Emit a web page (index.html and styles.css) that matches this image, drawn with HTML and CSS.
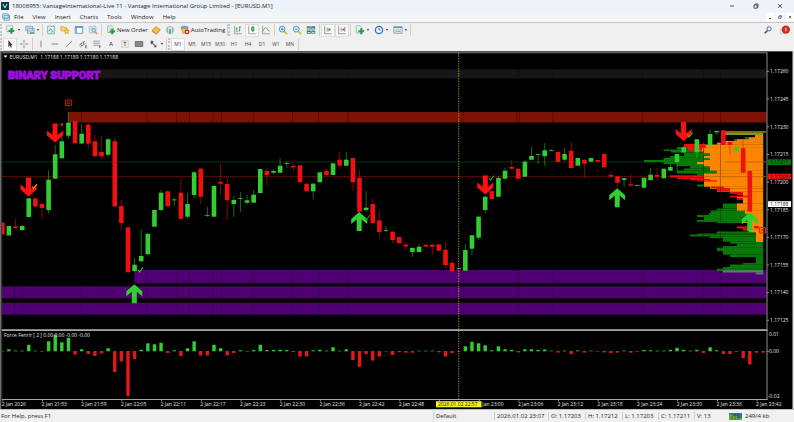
FILE: index.html
```html
<!DOCTYPE html>
<html lang="en">
<head>
<meta charset="utf-8">
<title>18008955: VantageInternational-Live 11 - [EURUSD,M1]</title>
<link rel="stylesheet" href="styles.css">
</head>
<body>
<header class="titlebar">
  <svg class="app-icon" viewBox="0 0 8 8"><rect width="8" height="8" fill="#0b3d46"/><path d="M2 2l2 4 2-4" fill="none" stroke="#d8eef0" stroke-width=".9"/></svg>
  <h1 class="title">18008955: VantageInternational-Live 11 - Vantage International Group Limited - [EURUSD,M1]</h1>
  <div class="window-buttons">
    <button aria-label="Minimize"><svg viewBox="0 0 8 8"><path d="M2 4h4" stroke="#333" stroke-width=".8"/></svg></button>
    <button aria-label="Restore"><svg viewBox="0 0 8 8"><path d="M2 3h3.2v3.2H2zM3 3V2h3v3.4h-.8" fill="none" stroke="#333" stroke-width=".8"/></svg></button>
    <button aria-label="Close"><svg viewBox="0 0 8 8"><path d="M2 2l4 4M6 2l-4 4" stroke="#333" stroke-width=".8"/></svg></button>
  </div>
</header>

<nav class="menubar">
  <svg class="menu-icon" viewBox="0 0 8 8"><path d="M.5.8h5.8v4.4H.5zM2 2.6h5.5v4.6H2z" fill="#e8f3fa" stroke="#4d93bd" stroke-width=".8"/><path d="M3 5.8l1.2-1.2 1 .7 1.3-1.4" fill="none" stroke="#4aa34a" stroke-width=".6"/></svg>
  <button>File</button><button>View</button><button>Insert</button><button>Charts</button><button>Tools</button><button>Window</button><button>Help</button>
  <div class="doc-buttons">
    <button aria-label="Minimize chart"><svg viewBox="0 0 8 8"><path d="M3 5.5h2" stroke="#444" stroke-width=".8"/></svg></button>
    <button aria-label="Restore chart"><svg viewBox="0 0 8 8"><path d="M2.5 3.6h2.3v2H2.5zM3.5 3.5v-1h2v2h-.7" fill="none" stroke="#557" stroke-width=".7"/></svg></button>
    <button aria-label="Close chart"><svg viewBox="0 0 8 8"><path d="M3 3l2.2 2.2M5.2 3L3 5.2" stroke="#444" stroke-width=".8"/></svg></button>
  </div>
</nav>

<div class="toolbar">
  <div class="group grip">
    <button class="drop" aria-label="New chart"><svg viewBox="0 0 12 12"><path d="M1 1h7v7H1z" fill="#f4f8fa" stroke="#8a9ba5" stroke-width=".8"/><path d="M6.5 3.5v7M3 7h7" stroke="#1fa52b" stroke-width="2.6"/></svg></button>
    <button class="drop" aria-label="Profiles"><svg viewBox="0 0 12 12"><path d="M1 1.5h8V7H1zM3 4h8v6H3z" fill="#cfe2f2" stroke="#6f9cc3" stroke-width=".9"/><path d="M6 9.5h5" stroke="#49a04f" stroke-width="1.4"/></svg></button>
  </div>
  <div class="group">
    <button aria-label="Market watch"><svg viewBox="0 0 12 12"><path d="M2 1.5h8v9H2z" fill="#e9f5fb" stroke="#58a6c9"/><path d="M3.5 7.5l2-3 2 2" fill="none" stroke="#3b9f48" stroke-width="1.2"/><path d="M6 9l2.500-2" stroke="#dd9b35" stroke-width="1.5"/></svg></button>
    <button aria-label="Navigator"><svg viewBox="0 0 12 12"><path d="M1 2h3l1 1h3v4H1z" fill="#f5d261" stroke="#d09c2c" stroke-width=".8"/><path d="M8 4l1 2.200 2.300.3-1.700 1.600.5 2.400L8 9.300l-2.100 1.200.5-2.400-1.700-1.600L7 6.200z" fill="#ffcd2c" stroke="#c98d1a" stroke-width=".6"/></svg></button>
    <button aria-label="Terminal"><svg viewBox="0 0 12 12"><path d="M1.5 2h9v8h-9z" fill="#fff" stroke="#4a91c4"/><path d="M1.5 2.5h9" stroke="#2f7fc0" stroke-width="1.4"/><path d="M3 3v7" stroke="#79b2d8" stroke-width="1.4"/></svg></button>
    <button aria-label="Strategy tester"><svg viewBox="0 0 12 12"><path d="M1.5 1.5h8v8h-8z" fill="#e5eff5" stroke="#8db1c7" stroke-width=".8"/><path d="M3 4h5M3 6h3" stroke="#7b9cb0" stroke-width=".8"/><circle cx="7" cy="6.5" r="2" fill="#bfe0ef" stroke="#4e8fae" stroke-width=".8"/><path d="M8.5 8l2.500 2.800" stroke="#d39d2b" stroke-width="1.4"/></svg></button>
  </div>
  <div class="group">
    <button class="wide"><svg viewBox="0 0 12 12"><path d="M2 1h5l2 2v6H2z" fill="#eef4f6" stroke="#8ba0aa" stroke-width=".8"/><path d="M3.5 3.5h3M3.5 5h4" stroke="#90a4ad" stroke-width=".6"/><path d="M7.5 4.5V11M4.3 7.7h6.500" stroke="#1fa52b" stroke-width="2.4"/></svg>New Order</button>
    <button aria-label="MetaEditor"><svg viewBox="0 0 12 12"><path d="M1 6.5L6 2l5 3.500-4.500 5z" fill="#f5bf3a" stroke="#ab761c" stroke-width=".8"/><path d="M1 7.5l5.500 3.500L11 6" fill="none" stroke="#c58a26"/></svg></button>
    <button aria-label="Signals"><svg viewBox="0 0 12 12"><circle cx="6" cy="6" r="4.6" fill="#d3e2e4" stroke="#a3b6bb" stroke-width=".8"/><path d="M3.5 3.5a3.500 3.500 0 0 0 0 5M8.5 3.5a3.500 3.500 0 0 1 0 5" fill="none" stroke="#5798a4" stroke-width=".9"/><path d="M6 5v5.500" stroke="#2f9e58" stroke-width="1.8"/></svg></button>
    <button class="wide"><svg viewBox="0 0 12 12"><ellipse cx="5.5" cy="3.5" rx="4.5" ry="2.2" fill="#71abd6" stroke="#407ba8" stroke-width=".5"/><path d="M2 4.5h7L8 10H3z" fill="#f2c34e" stroke="#a9822b" stroke-width=".5"/><circle cx="8.5" cy="8.3" r="2.9" fill="#dc2b20"/><path d="M7.5 7.3h2v2h-2z" fill="#fff"/></svg>AutoTrading</button>
  </div>
  <div class="group grip charts">
    <button aria-label="Bar chart"><svg viewBox="0 0 12 12"><path d="M2 1v9.500h8.500" fill="none" stroke="#777" stroke-width=".8"/><path d="M4.5 3v5h1M8 1.5v6M8 2.5h1.500M3.5 4h1M6.8 7H8" fill="none" stroke="#2e9b45" stroke-width="1"/></svg></button>
    <button class="pressed" aria-label="Candlesticks"><svg viewBox="0 0 12 12"><path d="M2 1v9.500h8.500" fill="none" stroke="#777" stroke-width=".8"/><path d="M7 .8v8" stroke="#2e9b45" stroke-width=".8"/><path d="M5.6 2.5h2.800V7H5.6z" fill="#5fc66c" stroke="#238b36" stroke-width=".8"/></svg></button>
    <button aria-label="Line chart"><svg viewBox="0 0 12 12"><path d="M2 1v9.500h8.500" fill="none" stroke="#777" stroke-width=".8"/><path d="M2.5 7c2-5 4-4 5-2s2 2 3 2" fill="none" stroke="#2e9b45" stroke-width=".9"/></svg></button>
  </div>
  <div class="group">
    <button aria-label="Zoom in"><svg viewBox="0 0 12 12"><path d="M7 7l4 4" stroke="#e0b43a" stroke-width="2"/><circle cx="5" cy="5" r="3.5" fill="#dff0fa" stroke="#3f87bd"/><path d="M5 3.2v3.600M3.2 5h3.600" stroke="#3478aa" stroke-width=".9"/></svg></button>
    <button aria-label="Zoom out"><svg viewBox="0 0 12 12"><path d="M7 7l4 4" stroke="#e0b43a" stroke-width="2"/><circle cx="5" cy="5" r="3.5" fill="#dff0fa" stroke="#3f87bd"/><path d="M3.2 5h3.600" stroke="#3478aa" stroke-width=".9"/></svg></button>
    <button aria-label="Tile windows"><svg viewBox="0 0 12 12"><path d="M1 1.5h4.700v4H1zM6.3 6.5H11v4H6.3z" fill="#3c9a45"/><path d="M6.3 1.5H11v4H6.3zM1 6.5h4.700v4H1z" fill="#2f6fb8"/><path d="M2 4h2.700M7.3 4H10M2 9h2.700M7.3 9H10" stroke="#e4f2f4" stroke-width="1"/></svg></button>
  </div>
  <div class="group charts">
    <button class="pressed" aria-label="Auto scroll"><svg viewBox="0 0 12 12"><path d="M2 1v9.500h8.500M5 3v5" fill="none" stroke="#777" stroke-width=".9"/><path d="M6.5 3.2L10 5.5 6.5 7.8z" fill="#3aa34a"/></svg></button>
    <button class="pressed" aria-label="Chart shift"><svg viewBox="0 0 12 12"><path d="M2 1v9.500h8.500M5 3v5M9.5 2v6" fill="none" stroke="#777" stroke-width=".9"/><path d="M9 3.5L5.7 5.5 9 7.5z" fill="#8b5b50"/></svg></button>
  </div>
  <div class="group last">
    <button class="drop" aria-label="Indicators"><svg viewBox="0 0 12 12"><path d="M1.5 1h5l2 2v6.500h-7z" fill="#eff3f5" stroke="#8ba0aa" stroke-width=".8"/><path d="M7.5 4v7M4 7.5h7" stroke="#1fa52b" stroke-width="2.5"/></svg></button>
    <button class="drop" aria-label="Periods"><svg viewBox="0 0 12 12"><circle cx="6" cy="6" r="4.3" fill="#eef7ff" stroke="#2877bd" stroke-width="1.6"/><path d="M6 3.5V6h2" fill="none" stroke="#345" stroke-width=".8"/></svg></button>
    <button class="drop" aria-label="Templates"><svg viewBox="0 0 12 12"><path d="M1 2h10v8H1z" fill="#e0edf6" stroke="#6f9cc3" stroke-width=".9"/><path d="M1 2.8h10" stroke="#5b92c3" stroke-width="1.5"/><path d="M2.5 6.5l2-1.500 2 1.500 3-1.500" fill="none" stroke="#d28a4c" stroke-width=".8"/><path d="M2.5 8.5l3-1 4 .8" fill="none" stroke="#4aa35a" stroke-width=".8"/></svg></button>
  </div>
  <div class="right-tools">
    <button aria-label="Search"><svg viewBox="0 0 12 12"><path d="M5.5 6.5L2 10" stroke="#244f9c" stroke-width="1.8"/><circle cx="7.3" cy="4.6" r="2.5" fill="#fff" stroke="#3566b5" stroke-width="1.2"/></svg></button>
    <button aria-label="Notifications, 1 new"><svg viewBox="0 0 12 12"><path d="M0 5h6v5H2.500L1 11.5V10H0z" fill="#e5e5e5" stroke="#aaa" stroke-width=".6"/><circle cx="7" cy="5.5" r="5" fill="#cf2a1c"/><path d="M7 3.2v4.500" stroke="#fff" stroke-width="1"/></svg></button>
  </div>
</div>

<div class="toolbar tools">
  <div class="group grip">
    <button class="pressed" aria-label="Cursor"><svg viewBox="0 0 12 12"><path d="M4 1.5v8l1.800-1.600 1.200 2.600 1.300-.6-1.200-2.500h2.400z" fill="#3c3c3c"/></svg></button>
    <button aria-label="Crosshair"><svg viewBox="0 0 12 12"><path d="M6 1v4M6 7v4M1 6h4M7 6h4" stroke="#777" stroke-width=".9"/></svg></button>
  </div>
  <div class="group">
    <button aria-label="Vertical line"><svg viewBox="0 0 12 12"><path d="M6 2v8" stroke="#666" stroke-width=".9"/></svg></button>
    <button aria-label="Horizontal line"><svg viewBox="0 0 12 12"><path d="M2 6h8" stroke="#666" stroke-width=".9"/></svg></button>
    <button aria-label="Trendline"><svg viewBox="0 0 12 12"><path d="M2.5 9.5l7-7" stroke="#555" stroke-width=".9"/></svg></button>
    <button aria-label="Channel"><svg viewBox="0 0 12 12"><path d="M1.5 7.5l7-5M2.5 9.8l7-5M4 4.5v4M6.5 3v4" stroke="#666" stroke-width=".8"/><path d="M11 8H9v2.800h2M9 9.3h1.500" fill="none" stroke="#555" stroke-width=".7"/></svg></button>
    <button aria-label="Fibonacci"><svg viewBox="0 0 12 12"><path d="M1.5 2.5h8M1.5 5h8M1.5 7.5h8" stroke="#777" stroke-width=".8"/><path d="M11 8.2H9V11M9 9.5h1.500" fill="none" stroke="#555" stroke-width=".7"/></svg></button>
    <button class="letter" aria-label="Text">A</button>
    <button aria-label="Text label"><svg viewBox="0 0 12 12"><path d="M2 2h8v8H2z" fill="none" stroke="#999" stroke-width=".7" stroke-dasharray="1 .6"/><path d="M4 4h4M6 4v4.500" stroke="#555" stroke-width=".9"/></svg></button>
    <button aria-label="Rectangle"><svg viewBox="0 0 12 12"><path d="M1.5 3h9v6h-9z" fill="#888" stroke="#555" stroke-width=".8"/></svg></button>
    <button class="drop" aria-label="Arrows"><svg viewBox="0 0 12 12"><path d="M1.5 3.5l2-2 2 2-1 1 3 3 1.300-1V10H5.500L7 8.800l-3-3-.9.900z" fill="#555"/></svg></button>
  </div>
  <div class="group grip periods last">
    <button class="pressed">M1</button><button>M5</button><button>M15</button><button>M30</button><button>H1</button><button>H4</button><button>D1</button><button>W1</button><button>MN</button>
  </div>
</div>

<main class="chart-window">
  <svg id="chart" class="chart" viewBox="0 51 794 359" role="img" aria-label="EURUSD M1 candlestick chart"></svg>
</main>

<footer class="statusbar">
  <span>For Help, press F1</span>
  <span>Default</span>
  <span>2026.01.02 23:07</span>
  <span>O: 1.17203</span>
  <span>H: 1.17212</span>
  <span>L: 1.17203</span>
  <span>C: 1.17211</span>
  <span>V: 13</span>
  <span class="traffic"><svg viewBox="0 0 13 7"><rect width="13" height="7" fill="#2f6f9f"/><path d="M0 7V1h4v2h4v2h5v2z" fill="#6da43a"/><path d="M3 0v7M6 0v7M9 0v7" stroke="#244f33" stroke-width=".6"/></svg>249/4 kb</span>
</footer>
<script src="chart.js"></script>
</body>
</html>
```
FILE: styles.css
```css
* { box-sizing: border-box; }

body {
  margin: 0;
  min-height: 100vh;
  display: flex;
  flex-direction: column;
  background: #f0f0f0;
  color: #222;
  font: 6px/8px "Open Sans", "Noto Sans", sans-serif;
}

button {
  display: flex;
  align-items: center;
  justify-content: center;
  margin: 0;
  padding: 0;
  border: 0;
  background: none;
  color: inherit;
  font: inherit;
}

svg { display: block; flex: none; }

.titlebar {
  display: flex;
  align-items: center;
  height: 12px;
  padding: 0 2px 0 1px;
  background: #edf3f9;
}
.app-icon { width: 8px; height: 8px; }
.title {
  flex: 1;
  margin: 0 0 0 3px;
  font-size: 6px;
  font-weight: 400;
  white-space: nowrap;
}
.window-buttons { display: flex; }
.window-buttons button { width: 24px; height: 12px; }
.window-buttons svg { width: 8px; height: 8px; }

.menubar {
  display: flex;
  align-items: center;
  gap: 9px;
  height: 11px;
  padding-left: 2px;
  border-bottom: 1px solid #c3c6c9;
  background: #f3f4f5;
}
.menu-icon { width: 8px; height: 8px; margin-right: -5px; }
.doc-buttons { display: flex; gap: 2px; margin-left: auto; }
.doc-buttons button { width: 8px; height: 8px; background: #fff; }
.doc-buttons svg { width: 8px; height: 8px; }

.toolbar {
  display: flex;
  align-items: center;
  height: 14px;
  background: #f0f0f0;
}
.toolbar svg { width: 10px; height: 10px; }
.toolbar button { width: 14px; height: 13px; }
.group {
  display: flex;
  align-items: center;
  height: 12px;
  padding: 0 1px;
  border-right: 1px solid #d0d0d0;
}
.grip { border-left: 2px dotted #c4c4c4; }
.toolbar .drop { width: 19px; }
.drop::after {
  content: "";
  margin-left: 2px;
  border: 1px solid transparent;
  border-top: 2px solid #333;
  border-bottom: 0;
}
.toolbar .wide { width: auto; gap: 1px; padding: 0 1px 0 3px; }
.toolbar .pressed { background: #fafafa; box-shadow: inset 0 0 0 1px #dcdcdc; }
.right-tools { display: flex; gap: 3px; margin-left: auto; padding-right: 2px; }
.tools .letter { font-weight: 600; color: #555; }
.periods { margin-left: 1px; }
.periods button { font-size: 5px; color: #444; }

.chart-window { background: #000; }
.chart { width: 100%; height: auto; }
.chart text {
  font: 5px "Open Sans", "Noto Sans", sans-serif;
  fill: #e4e4e4;
}
.chart .headline {
  font: 900 11px Roboto, sans-serif;
  fill: #9a10d8;
  stroke: #9a10d8;
  stroke-width: 1px;
}
.chart .dark { fill: #1a1a1a; }

.statusbar {
  display: grid;
  grid-template-columns: 1fr 61px 54px 37px 37px 36px 36px 35px 65px;
  align-items: center;
  min-height: 12px;
  background: #f0f0f0;
}
.statusbar span {
  padding-left: 2px;
  border-left: 1px solid #cfcfcf;
  white-space: nowrap;
}
.statusbar span:first-child { padding-left: 1px; border-left: 0; }
.statusbar .traffic { display: flex; align-items: center; gap: 3px; padding-left: 0; border-left: 0; }
.traffic svg { width: 13px; height: 7px; }
```
FILE: chart.js
```js
const svg = document.getElementById("chart");
const NS = "http://www.w3.org/2000/svg";

function add(tag, attrs, text) {
  const el = document.createElementNS(NS, tag);
  for (const key in attrs) el.setAttribute(key, attrs[key]);
  if (text) el.textContent = text;
  svg.appendChild(el);
}
function box(x1, y1, x2, y2, fill) {
  add("rect", { x: x1, y: y1, width: x2 - x1, height: y2 - y1, fill });
}
function label(x, y, text, cls) {
  add("text", { x, y, class: cls || "" }, text);
}
const barX = i => 2.3 + 6.615 * i;
const RED = "#f01010", GREEN = "#32cd32";

box(0, 51, 794, 410, "#000");

// Supply and demand zones: x, top, bottom, fill
const zones = [
  [98, 69.3, 78.3, "#171717"],
  [68.5, 112, 122.5, "#7d1307"],
  [134.3, 270, 283.3, "#500072"],
  [2, 286.3, 298.3, "#500072"],
  [2, 302.7, 314.7, "#500072"]
];
const marks = [14.5, 22, 81.5, 147, 176.5, 189.5, 213, 221.5, 253.3, 292.5, 318.5, 348, 463, 517, 519.5, 553, 642.3, 703.5, 720.5];
for (const [x, top, bottom, fill] of zones) {
  box(x, top, 766.5, bottom, fill);
  for (const m of marks) if (m > x) add("path", { d: `M${m} ${top}V${bottom}`, stroke: "#000", "stroke-opacity": ".45", "stroke-width": ".7" });
}

// Price lines
add("path", { d: "M2 162H766", stroke: "#0d4a14", "stroke-width": ".7" });
add("path", { d: "M2 176.7H766", stroke: "#a31414", "stroke-width": ".8", "stroke-dasharray": "1.5 .5" });

// Volume profile rows: left, top, bottom, right
const greenRows = [
  [725, 131.5, 135], [745, 137, 139], [734, 139, 141],
  [677, 147, 149.5], [663.5, 149.5, 151], [671, 151, 152.5], [684, 152.5, 156],
  [670, 156, 157.7], [663.5, 157.7, 160], [644, 160, 162], [663.5, 162, 164], [677, 164, 166],
  [690, 166, 168.5], [684, 168.5, 170.5], [677, 170.5, 173.5], [697, 173.5, 175.5],
  [697, 184.5, 186.5], [723, 203.5, 208.5], [717, 208.5, 210.5], [711, 210.5, 213],
  [709, 213, 215], [697, 215, 217], [704, 217, 220], [697, 220, 221.8], [717, 221.8, 223],
  [717, 231.5, 233.5], [697, 233.5, 234.5], [690, 234.5, 236.3], [710, 236.3, 238],
  [723, 238, 241.5], [730, 241.5, 243.5], [737, 243.5, 246], [723, 246, 247.7],
  [717, 247.7, 251], [723, 251, 254.5], [730, 254.5, 257], [756, 257, 263],
  [743, 263, 264.5], [730, 264.5, 267], [723, 267, 268.7], [717, 268.7, 271]
];
for (const [l, t, b] of greenRows) box(l, t, 763.2, b + .1, "#087808");
const orangeRows = [
  [755, 134.5, 137.5], [749, 137.5, 139.3], [737, 139.3, 141], [723, 141, 142.7],
  [717, 142.7, 144.5], [704, 144.5, 147.5], [697, 147.5, 151], [704, 151, 153], [710, 153, 156],
  [704, 156, 158], [710, 158, 160], [704, 160, 162], [697, 162, 164], [704, 164, 166], [710, 166, 170.5],
  [717, 170.5, 173.5], [704, 173.5, 186.5], [710, 186.5, 188.5], [717, 188.5, 191.5],
  [730, 191.5, 193], [743, 193, 196], [737, 196, 199], [743, 199, 203.5],
  [737, 203.5, 210.5], [745, 210.5, 214], [749, 214, 222], [743, 222, 228],
  [749, 228, 232], [756, 232, 241.7]
];
for (const [l, t, b] of orangeRows) box(l, t, 763.2, b + .2, "#ff8400");
box(743, 223, 749, 230.5, "#000");
const redRows = [
  [684, 144, 148, 704], [690, 148, 150.5, 702], [670, 175.3, 177.5, 704], [677, 177.5, 179, 704],
  [690, 179, 180.3, 710], [697, 180.3, 181.5, 717], [711, 186.5, 188, 724], [717, 188, 191.5, 730],
  [730, 192, 193.7, 743], [737, 193.7, 195, 743], [730, 195.7, 197.3, 749], [737, 198, 199.7, 743],
  [737, 226.5, 228.5, 748], [743, 228.5, 230.5, 749]
];
for (const [l, t, b, r] of redRows) box(l, t, r, b, "#e8100c");
box(723, 131, 766, 132.7, "#b05018");
box(725, 132.7, 763.2, 135, "#7f9628");
box(723, 270.3, 763.2, 272.5, "#5c7b78");
box(756, 272.5, 763.2, 274.5, "#5c7b78");
add("path", { d: "M703.5 147V270M720.5 123V270", stroke: "#000", "stroke-opacity": ".5", "stroke-width": ".6" });
add("path", { d: "M704 176.7H766M725 162H766", stroke: "#a35a08", "stroke-width": ".7" });

// Candles in bar order: direction, body top, body bottom, high, low
const candles = [
  ["r",222.5,234.5],["g",226,235.5],["r",226.5,228,219,229],["g",226,230,225,231],["g",198.3,217],
  ["r",198.5,206.5,197,207],["r",204,208,203,219.5],["g",179.7,210,170.5,213.5],["g",154.3,178.7,145,179],["g",141.3,158.3,135,158],
  ["g",122.7,135.7,112,138],["r",121.3,143.3],["g",133.7,143.5,124,144],["r",124.7,143.7,123,149],["r",141.3,156.3,135,157],
  ["r",152,156.3,136,159],["g",139.3,154.7,138,156],["r",141.3,206.3,138,207],["r",206,223,200,231],["r",227.3,272.3],
  ["g",264.7,271,258,272],["g",256,261.3,229,262],["g",233.7,254.3],["g",210,226.7],["g",192.7,210,190,211],
  ["r",191.3,206.3],["g",199.5,200.3,198,206],["r",192.7,218.7,179,220],["g",204,216.7,193,219],["g",172.3,195,171,198],
  ["r",168.7,196.7,168,204],["g",215,215.8,207,217],["g",186,216.7],["r",182,183.7,164,195],["r",184,200.3,177,220],
  ["g",200,204,196,217],["g",198,198.8,192,212],["g",200.3,202.7,195,204],["g",194.7,202.7,190,203],["g",169,193],
  ["r",171,175,168,186],["g",171,172.7,169,174],["g",165.7,172.7,158,173],["g",163,163.8,161,168],["r",166,167.3,164,171],
  ["r",165.3,182.3],["r",183.7,191.3],["g",183.7,191.3,183,199],["g",172.3,182.3],["r",171,175,169,176],
  ["g",163.3,175],["r",159.7,165.7,152,166],["g",159.7,165.7,152,166],["r",158,182.3,158,191],["r",178,211.7,170,212],
  ["g",207.7,210,191,212],["r",204,223,198,225],["r",220.3,232,210,238],["g",230,230.8,226,232],["r",231.7,240,231,243],
  ["r",237,243.3],["r",244.7,246.5,242,249],["g",248,252,247,257],["g",246.7,252,244,253],["r",244.7,246.7],
  ["r",244.7,246.7,244,255],["r",244.3,250.7],["r",250,265,242,268],["r",263,271,260,272],["g",268.3,269.2],
  ["g",250,270.7,244,271],["g",235.3,248.7,235,255],["g",216.7,237.7,216,240],["g",196.7,210,196,213],["r",191,199],
  ["g",178,196.7,176,197],["g",170.7,178.7,168,179],["r",167,168.7,160,170],["r",168.7,178.7],["g",161.7,176.7,160,177],
  ["g",156,159.7,147,160],["g",154,154.8,154,164],["g",150.3,156.3,143,166],["g",150.3,151.1,149,151],["r",152,162],
  ["g",154,159.7,148,161],["r",150.7,168,142,168],["g",158,165.7],["r",159.7,163.7,159,178],["g",158,161.7],
  ["r",160,161.7],["r",154,167.3],["r",175,176.5,172,178],["r",176.3,182.7,176,187],["g",178.3,180,178,187],
  ["r",184.3,185.7,174,187],["g",185,185.8],["g",177.7,187.7],["g",174.7,180,168,181],["r",175,176.7,168,181],
  ["g",168.7,178.3],["g",167,170.7,163,171],["g",154,162,154,171],["g",147.3,152.3,146,153],["r",144.5,150.7],
  ["g",139.3,152.3,139,158],["r",144,148,142,156],["g",134,145.3,130,148],["g",131,132.3,131,135],["r",130.3,145],
  ["r",142,145,142,155],["g",147.5,151.5],["r",148.3,172.7,140,173],["r",171,211.7],["r",226,228.5]
];
candles.forEach(([dir, top, bottom, high, low], i) => {
  const x = barX(i), color = dir === "r" ? RED : GREEN;
  if (high) add("path", { d: `M${x} ${high}V${low}`, stroke: color, "stroke-width": ".8", "stroke-opacity": ".65" });
  box(Math.max(x - 2.3, 2), top, x + 2.3, bottom, color);
});

// Signal arrows and result ticks
for (const [x, y] of [[28.5, 196.5], [55, 142.5], [485.3, 194.5], [683.6, 141]])
  add("path", { transform: `translate(${x} ${y})`, fill: "#ff1010", d: "M0 0L8 -7V-12L2.5 -7.5V-19H-2.5V-7.5L-8 -12V-7Z" });
for (const [x, y] of [[134.3, 284.3], [359.2, 212], [617.2, 188.3], [749.8, 212.3]])
  add("path", { transform: `translate(${x} ${y})`, fill: GREEN, d: "M0 0L8 7V12L2.5 7.5V19H-2.5V7.5L-8 12V7Z" });
for (const [x, y, c] of [[34.5, 186.5, "#e09020"], [140.5, 270, GREEN], [367.5, 217.5, "#23852a"], [491.5, 178, "#2c9a30"], [690, 135, GREEN]])
  add("path", { transform: `translate(${x} ${y})`, fill: "none", stroke: c, "stroke-width": "1.1", d: "M-2.5 0L-1 2L2.5 -2.5" });
box(60.7, 123, 63, 126, "#c02020");
add("path", { d: "M65.5 100h5.8v5.5h-5.8zM67 101.5l2.8 2.5M69.8 101.5L67 104", fill: "none", stroke: "#d01818", "stroke-width": "1" });
add("path", { d: "M759.5 227.5h6v5.5h-6zM761 229l3 2.5M764 229l-3 2.5", fill: "none", stroke: "#e02010", "stroke-width": "1" });

// Force indicator, signed bar heights in bar order
const force = [-0.7,2,.7,.6,6.5,.6,-.7,10,16.5,9,13.5,-3.5,2,-3,-5,-2.5,3,-21,-10.5,-45,-8,1.5,8,7,8.5,-2,1,-5,3,10,
  -4.5,-4.5,6.5,3,-4.5,-2,1,-.7,1.2,6.5,1.2,1.4,1.6,1.3,-1,-5.5,-5.5,1,1.5,.6,4,.6,2,-9,-16,-3,-9.5,-5.5,-.6,-4,-1.2,
  -1.7,-1.7,.6,.6,.6,-1.3,-5.5,-2,-.8,5,9.5,8,6,1,5,2,1.3,-1.4,2,2,1.3,1.8,.6,-1.6,.7,-3,.9,-1.6,.7,-.6,-1.4,-2,-1.6,
  .7,-1.7,-.7,1.3,1,.6,.7,1.5,3.5,1.5,.6,1.5,-2,4,1,-3,-3,-.9,-7,-13.5,-1.7,-1.7];
force.forEach((v, i) => {
  const x = barX(i);
  box(Math.max(x - 1.7, 2), v > 0 ? 351.3 - v : 351, x + 1.7, v > 0 ? 351.3 : 351 - v, v > 0 ? GREEN : "#e01818");
});

// Crosshair and frame
add("path", { d: "M458.7 53V400", stroke: "#a8a83c", "stroke-width": ".8", "stroke-dasharray": "1.5 1" });
box(0, 51, 794, 51.7, "#777");
box(2, 52.3, 767.5, 53.2, "#8d8d8d");
box(0, 51, 1.2, 410, "#6c6c6c");
box(1.2, 52, 2.2, 400, "#3f3f3f");
box(792.5, 51, 794, 410, "#e0e0e0");
box(2, 329.2, 767.5, 331, "#a5a5a5");
box(2, 399, 767.5, 400, "#a5a5a5");
box(766.5, 53, 767.5, 400, "#8d8d8d");
box(0, 409, 794, 410, "#bdbdbd");

// Chart captions
add("path", { d: "M3.5 55.5h4l-2 2.3z", fill: "#fff" });
label(9.5, 58.5, "EURUSD,M1\u00a0\u00a01.17188 1.17189 1.17180 1.17188");
label(8, 79, "BINARY SUPPORT", "headline");
label(4, 337, "Force Fenrir [ 2 ] 0.00 0.00 -0.00 -0.00");

// Price scale
["1.17260","1.17245","1.17230","1.17215","1.17200","1.17185","1.17170","1.17155","1.17140","1.17125"].forEach((p, i) => {
  const y = 71.4 + i * 27.66;
  add("path", { d: `M767 ${y}h2`, stroke: "#aaa", "stroke-width": ".8" });
  label(770, y + 1.8, p);
});
box(768, 159.3, 791, 165, "#087808");
label(770, 164, "1.17211", "dark");
box(768, 173.7, 791, 179.5, "#f01010");
label(770, 178.5, "1.17203", "dark");
box(768, 201.2, 791, 207, "#fff");
label(770, 206, "1.17188", "dark");
label(769, 336.3, "0.01");
add("path", { d: "M767 351.3h2", stroke: "#aaa", "stroke-width": ".8" });
label(769, 353.2, "0.00");
label(768, 398.3, "-0.02");

// Time scale
["2026","21:53","21:59","22:05","22:11","22:17","22:23","22:30","22:36","22:42","22:48","22:54","23:00","23:06","23:12","23:18","23:24","23:30","23:36","23:42"].forEach((t, i) => {
  const x = 1.8 + i * 39.7;
  add("path", { d: `M${x + 1} 400v1.5`, stroke: "#aaa", "stroke-width": ".8" });
  if (i !== 11) label(x, 406.3, "2 Jan " + t);
});
box(436, 401.2, 481.5, 407.3, "#f4f41c");
label(438, 406.3, "2026.01.02 22:57", "dark");
```
